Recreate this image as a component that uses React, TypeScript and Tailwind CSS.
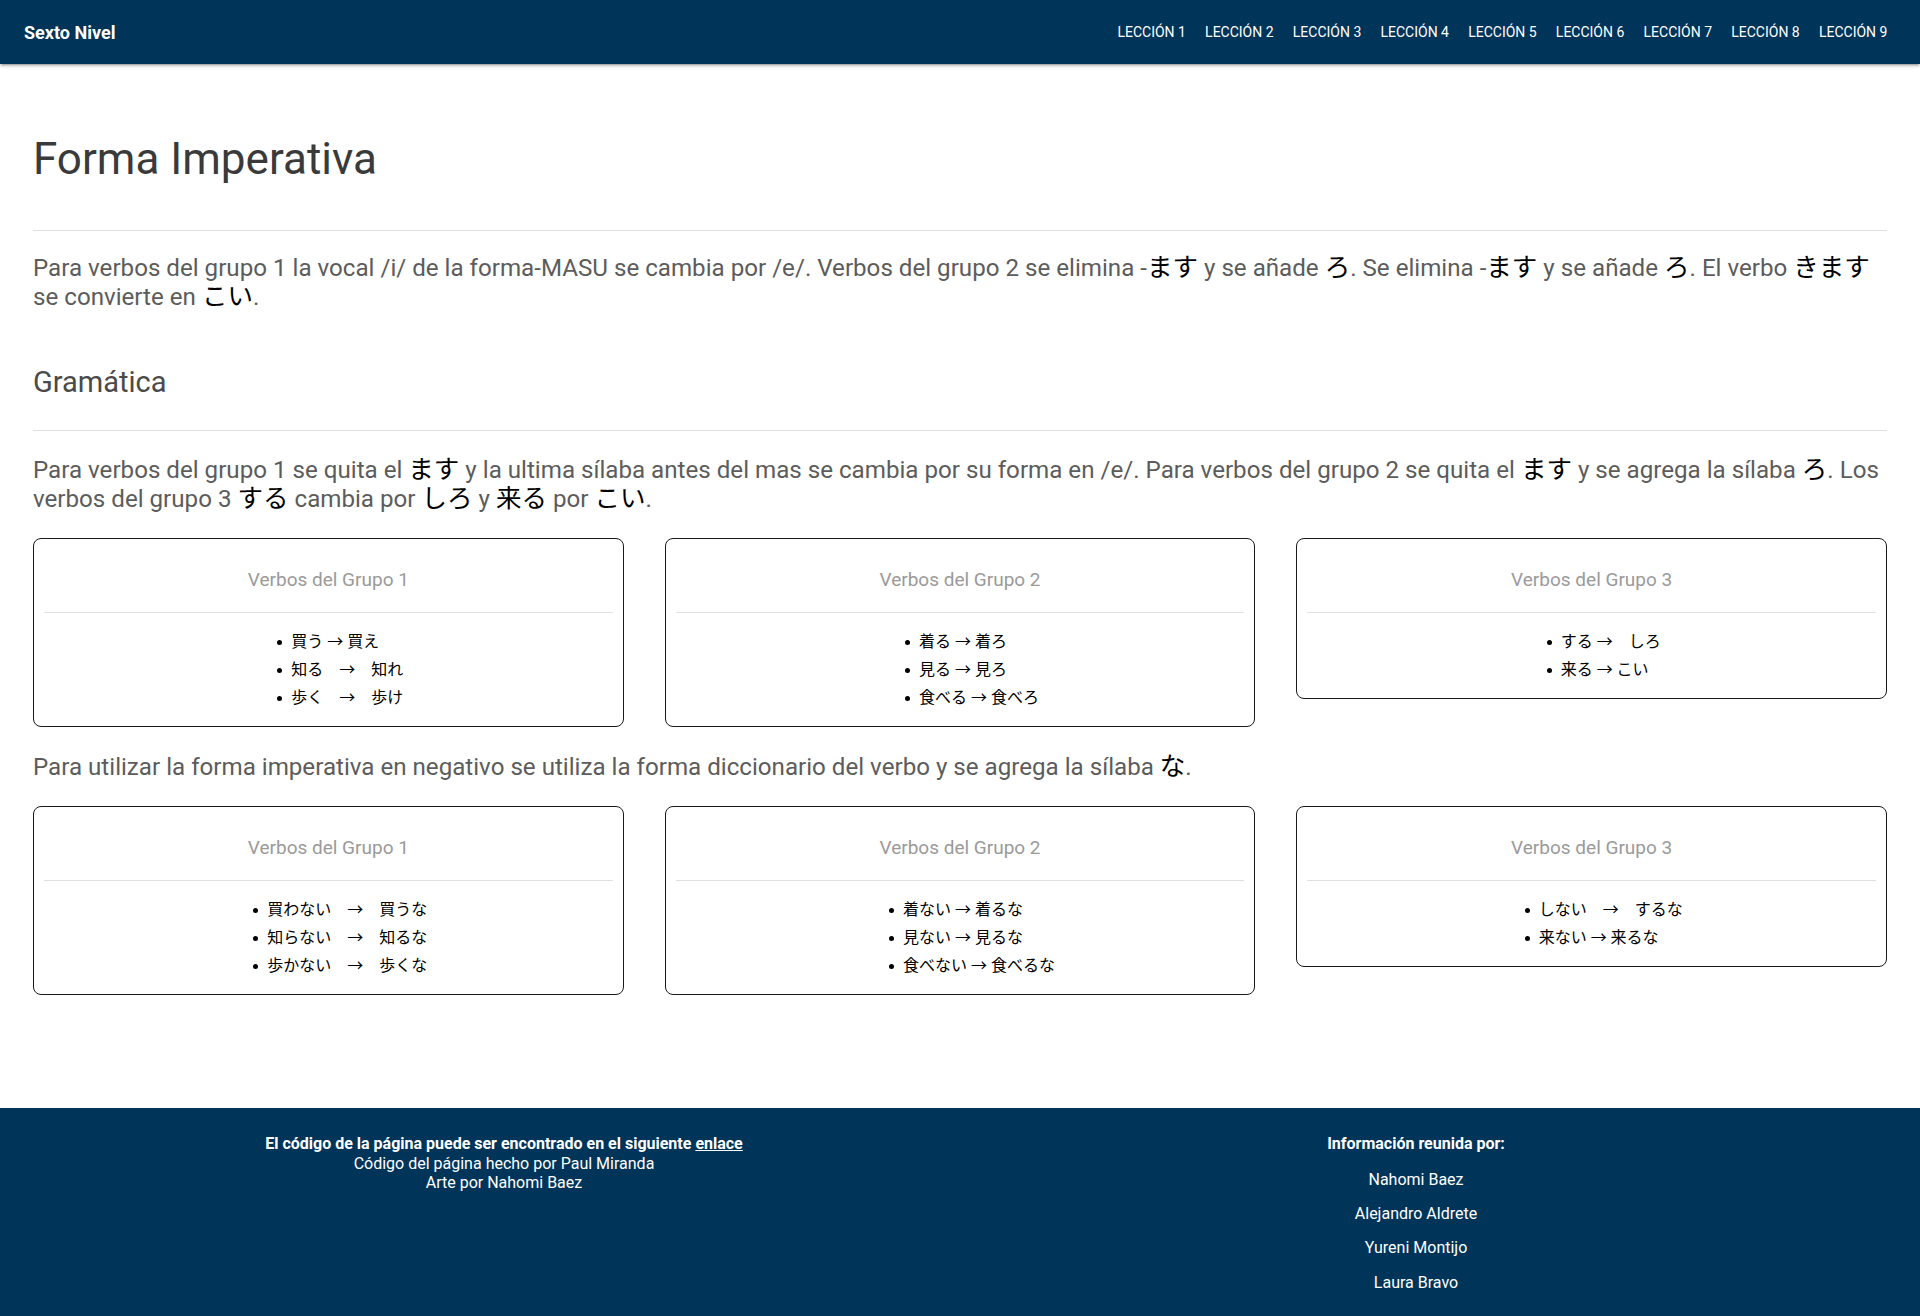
import React from "react";

const lessons = [1, 2, 3, 4, 5, 6, 7, 8, 9];

interface Group {
  title: string;
  items: string[];
}

const affirmative: Group[] = [
  { title: "Verbos del Grupo 1", items: ["買う → 買え", "知る　→　知れ", "歩く　→　歩け"] },
  { title: "Verbos del Grupo 2", items: ["着る → 着ろ", "見る → 見ろ", "食べる → 食べろ"] },
  { title: "Verbos del Grupo 3", items: ["する →　しろ", "来る → こい"] },
];

const negative: Group[] = [
  { title: "Verbos del Grupo 1", items: ["買わない　→　買うな", "知らない　→　知るな", "歩かない　→　歩くな"] },
  { title: "Verbos del Grupo 2", items: ["着ない → 着るな", "見ない → 見るな", "食べない → 食べるな"] },
  { title: "Verbos del Grupo 3", items: ["しない　→　するな", "来ない → 来るな"] },
];

const authors = ["Nahomi Baez", "Alejandro Aldrete", "Yureni Montijo", "Laura Bravo"];

// Japanese inside the running text renders darker and a touch bigger
function J({ children }: { children: React.ReactNode }) {
  return <span className="text-[25.5px] leading-[0] text-black">{children}</span>;
}

function GroupCard({ group }: { group: Group }) {
  return (
    <div className="rounded-[8px] border border-[#1a1a1a] px-[10px]">
      <div className="pt-[25px] pb-4 text-center text-[19px] leading-8 text-[#9a9a9a]">{group.title}</div>
      <div className="border-t border-[#e0e0e0]" />
      <div className="flex justify-center pt-[15px] pb-[14px]">
        <ul className="pl-6 text-base leading-[28px] text-black">
          {group.items.map((it) => (
            <li key={it} className="flex items-center">
              <span className="mr-[9px] h-[5px] w-[5px] rounded-full bg-black" />
              {it}
            </li>
          ))}
        </ul>
      </div>
    </div>
  );
}

export default function App() {
  return (
    <div className="flex min-h-[1316px] flex-col bg-white font-['Roboto','Noto_Sans_CJK_JP',sans-serif] text-black/[0.87]">
      <nav className="relative z-10 flex h-16 items-center justify-between bg-[#003459] pl-6 pr-[23px] shadow-[0_2px_2px_0_rgba(0,0,0,0.14),0_3px_1px_-2px_rgba(0,0,0,0.12),0_1px_5px_0_rgba(0,0,0,0.2)]">
        <span className="text-[18px] font-bold text-white">Sexto Nivel</span>
        <ul className="flex">
          {lessons.map((n) => (
            <li key={n}>
              <a href="#" className="px-[9.6px] text-sm uppercase text-white">
                Lección {n}
              </a>
            </li>
          ))}
        </ul>
      </nav>

      <main className="flex-1 px-[33px]">
        <h1 className="mt-[69px] text-[44px] leading-[52px] text-[#3a3a3a]">Forma Imperativa</h1>
        <hr className="mt-[45px] border-[#e0e0e0]" />
        <p className="mt-[23px] text-[24.15px] leading-[29px] text-[#5c5c5c]">
          Para verbos del grupo 1 la vocal /i/ de la forma-MASU se cambia por /e/. Verbos del grupo 2 se elimina
          -<J>ます</J> y se añade <J>ろ</J>. Se elimina -<J>ます</J> y se añade <J>ろ</J>. El verbo <J>きます</J> se
          convierte en <J>こい</J>.
        </p>

        <h2 className="mt-[52px] text-[29px] leading-9 text-[#4a4a4a]">Gramática</h2>
        <hr className="mt-[30px] border-[#e0e0e0]" />
        <p className="mt-[25px] text-[24.15px] leading-[29px] text-[#5c5c5c]">
          Para verbos del grupo 1 se quita el <J>ます</J> y la ultima sílaba antes del mas se cambia por su forma en
          /e/. Para verbos del grupo 2 se quita el <J>ます</J> y se agrega la sílaba <J>ろ</J>. Los verbos del grupo 3{" "}
          <J>する</J> cambia por <J>しろ</J> y <J>来る</J> por <J>こい</J>.
        </p>

        <div className="mt-[24px] grid grid-cols-3 items-start gap-[41px]">
          {affirmative.map((g) => (
            <GroupCard key={g.title} group={g} />
          ))}
        </div>

        <p className="mt-[26px] text-[24.15px] leading-[29px] text-[#5c5c5c]">
          Para utilizar la forma imperativa en negativo se utiliza la forma diccionario del verbo y se agrega la
          sílaba <J>な</J>.
        </p>

        <div className="mt-[24px] grid grid-cols-3 items-start gap-[41px]">
          {negative.map((g) => (
            <GroupCard key={g.title} group={g} />
          ))}
        </div>
      </main>

      <footer className="grid grid-cols-2 bg-[#003459] px-12 pt-[26px] pb-4 text-center text-base text-white">
        <div>
          <p className="font-bold leading-5">
            El código de la página puede ser encontrado en el siguiente{" "}
            <a href="#" className="underline">
              enlace
            </a>
          </p>
          <p className="leading-[19px]">Código del página hecho por Paul Miranda</p>
          <p className="leading-[19px]">Arte por Nahomi Baez</p>
        </div>
        <div>
          <p className="font-bold leading-5">Información reunida por:</p>
          <ul className="mt-[9px]">
            {authors.map((a) => (
              <li key={a} className="leading-[34.3px]">
                {a}
              </li>
            ))}
          </ul>
        </div>
      </footer>
    </div>
  );
}
